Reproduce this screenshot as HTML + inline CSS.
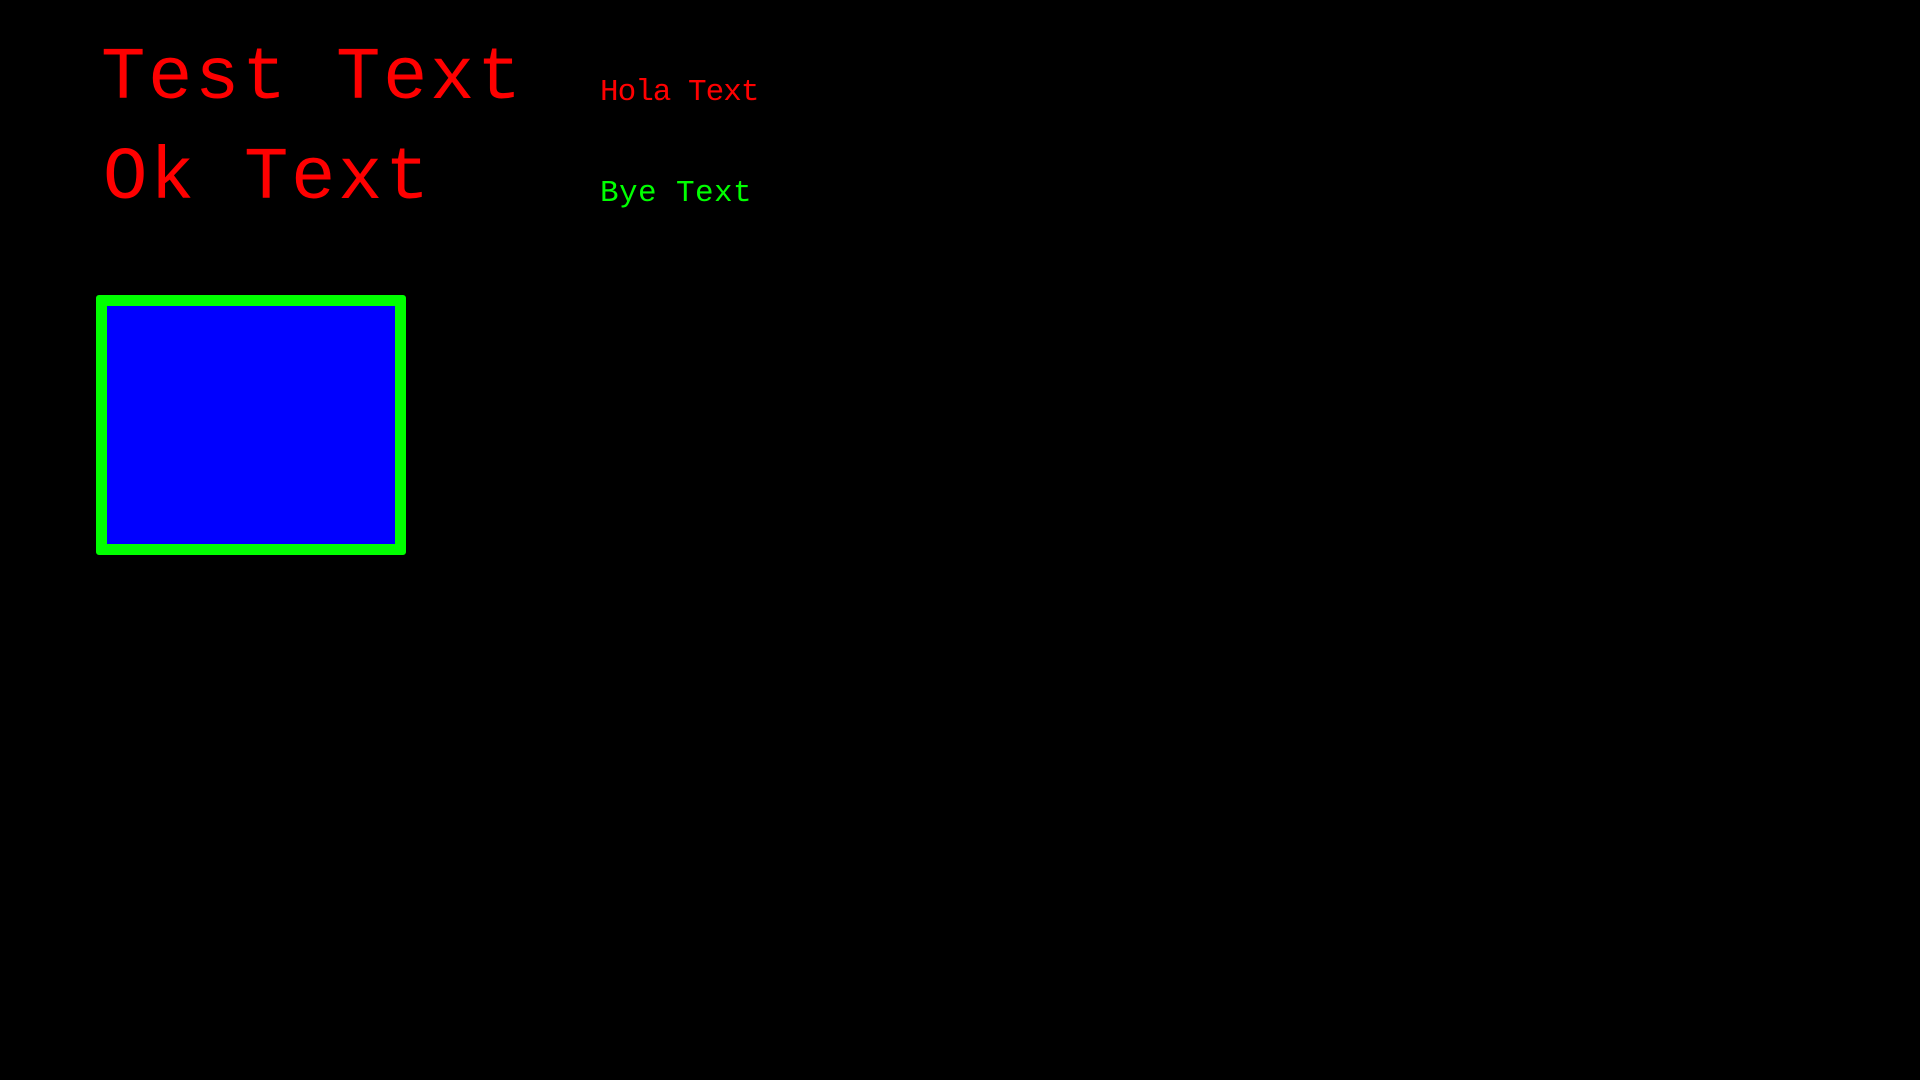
<!DOCTYPE html>
<html><head><meta charset="utf-8"><style>
html,body{margin:0;padding:0;background:#000;width:1920px;height:1080px;overflow:hidden}
svg{position:absolute;left:0;top:0}
.box{position:absolute;left:96px;top:295px;width:288px;height:238px;border:11px solid #00ff00;background:#0000ff;border-radius:3px}
</style></head><body>
<svg width="1920" height="1080" xmlns="http://www.w3.org/2000/svg" font-family="Liberation Mono, monospace">
<text x="101" y="98" font-size="74" fill="#ff0000" letter-spacing="2.6">Test Text</text>
<text x="103" y="198" font-size="74" fill="#ff0000" letter-spacing="2.6">Ok Text</text>
<text x="600" y="100" font-size="31" fill="#ff0000" letter-spacing="-1">Hola Text</text>
<text x="600" y="201" font-size="31" fill="#00ff00" letter-spacing="0.4">Bye Text</text>
</svg>
<div class="box"></div>
</body></html>
